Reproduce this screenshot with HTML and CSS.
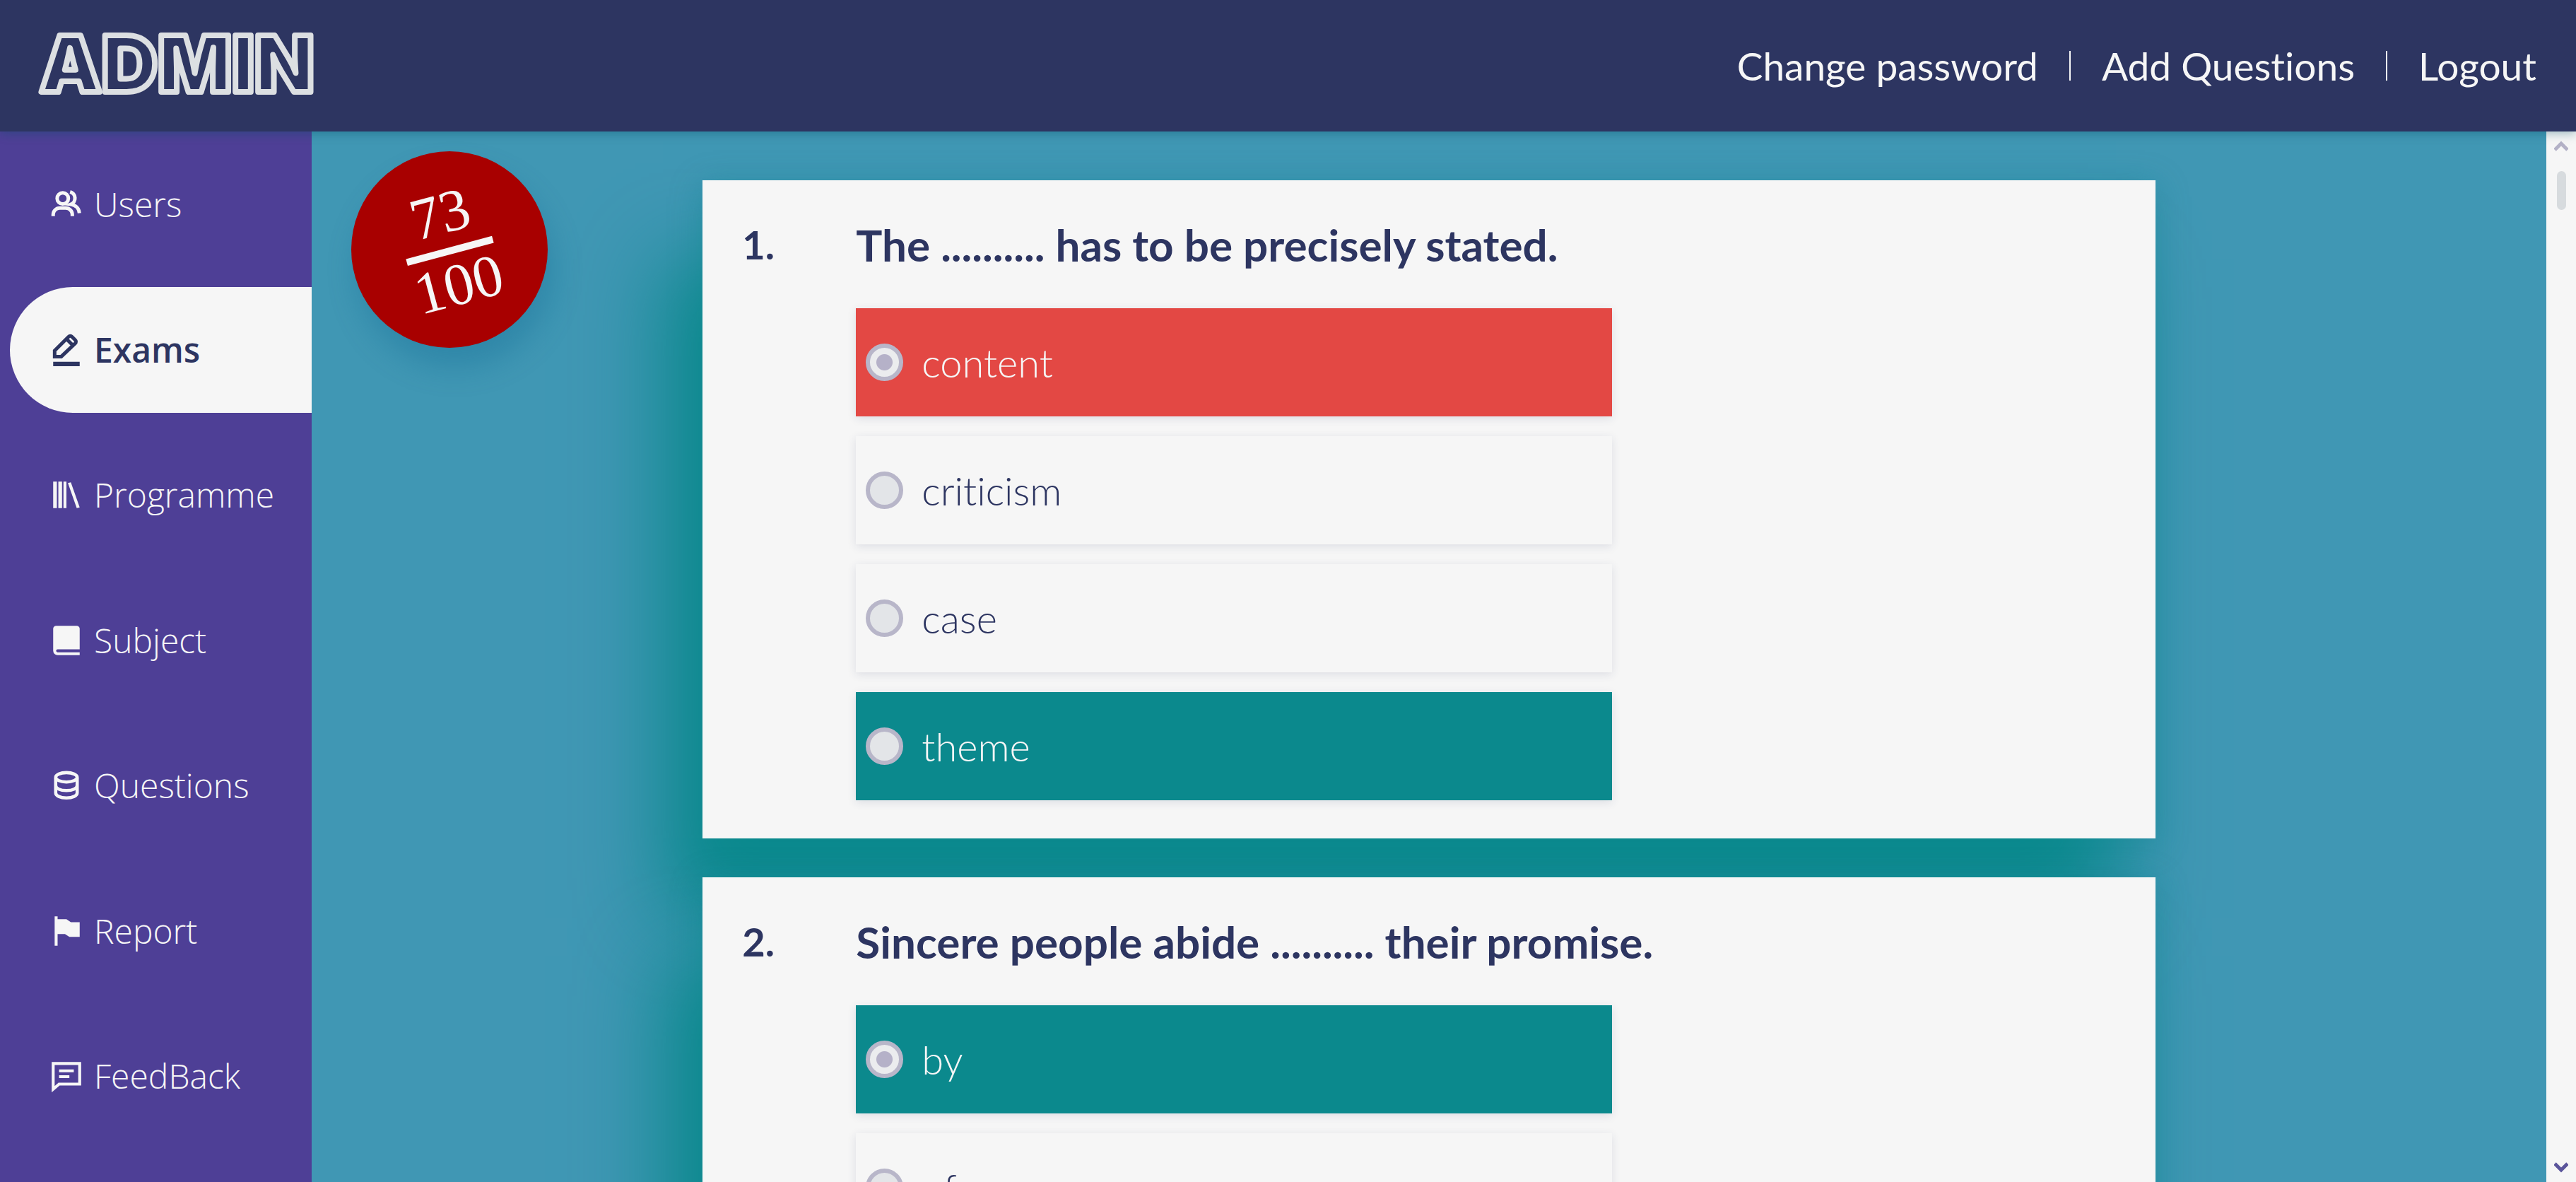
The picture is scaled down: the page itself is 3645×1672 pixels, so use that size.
FILE: index.html
```html
<!DOCTYPE html>
<html lang="en">
<head>
<meta charset="utf-8">
<title>Admin - Exams</title>
<link rel="stylesheet" href="styles.css">
</head>
<body>
<header class="topbar">
  <a class="logo" href="#"><svg class="logo-art" viewBox="0 0 400 100"><text x="0" y="87">ADMIN</text></svg></a>
  <nav class="account">
    <a href="#">Change password</a>
    <a href="#">Add Questions</a>
    <a href="#">Logout</a>
  </nav>
</header>
<div class="shell">
  <nav class="sidebar">
    <a class="side-link" href="#"><svg class="icon" viewBox="0 0 24 24" fill="none" stroke="currentColor" stroke-width="2.400"><circle cx="9.500" cy="8" r="3.800"/><path d="M3 20v-1a4.500 4.500 0 0 1 4.500-4.500h4A4.500 4.500 0 0 1 16 19v1M14.500 3.500a4.500 4.500 0 0 1 .5 8.500c3.500.5 5.500 3 5.800 6"/></svg>Users</a>
    <a class="side-link active" href="#"><svg class="icon" viewBox="0 0 24 24" fill="none" stroke="currentColor" stroke-width="2.400"><path d="M4 16.500v-4L13.500 3a1.500 1.500 0 0 1 2.200 0l2.300 2.300a1.500 1.500 0 0 1 0 2.200l-9.500 9zM12.500 5l4 4" /><path d="M3 21.500h18" stroke-width="3"/></svg>Exams</a>
    <a class="side-link" href="#"><svg class="icon" viewBox="0 0 24 24" fill="currentColor"><path d="M3 3h2.500v18H3zM6.500 3H9v18H6.500zM10 3h2v18h-2zM13 4l2-.5L21 20.500l-2 .5z"/></svg>Programme</a>
    <a class="side-link" href="#"><svg class="icon" viewBox="0 0 24 24" fill="currentColor"><path d="M21 18H6a1 1 0 0 0 0 2h15v2H6a3 3 0 0 1-3-3V4a2 2 0 0 1 2-2h14a2 2 0 0 1 2 2z"/></svg>Subject</a>
    <a class="side-link" href="#"><svg class="icon" viewBox="0 0 24 24" fill="none" stroke="currentColor" stroke-width="2.200"><ellipse cx="12" cy="6.500" rx="7.300" ry="3.200"/><path d="M4.700 7v10c0 2 3 3.500 7.300 3.500s7.300-1.500 7.300-3.500V7M4.700 12c0 2 3 3.500 7.300 3.500s7.300-1.500 7.300-3.500"/></svg>Questions</a>
    <a class="side-link" href="#"><svg class="icon" viewBox="0 0 24 24" fill="currentColor"><path d="M4 2h2v2h6l3 2h6v10h-7l-3-2H6v8H4z"/></svg>Report</a>
    <a class="side-link" href="#"><svg class="icon" viewBox="0 0 24 24" fill="none" stroke="currentColor" stroke-width="2"><path d="M3 3.500h18v14H7l-4 3.500zM7 8.500h10M7 12.500h7"/></svg>FeedBack</a>
  </nav>
  <main class="paper">
    <div class="score"><div class="fraction"><span class="got">73</span><span class="total">100</span></div></div>
    <section class="question">
      <span class="number">1.</span>
      <fieldset class="body">
        <legend class="prompt">The .......... has to be precisely stated.</legend>
        <label class="option wrong"><input type="radio" name="q1" checked disabled>content</label>
        <label class="option"><input type="radio" name="q1" disabled>criticism</label>
        <label class="option"><input type="radio" name="q1" disabled>case</label>
        <label class="option right"><input type="radio" name="q1" disabled>theme</label>
      </fieldset>
    </section>
    <section class="question">
      <span class="number">2.</span>
      <fieldset class="body">
        <legend class="prompt">Sincere people abide .......... their promise.</legend>
        <label class="option right"><input type="radio" name="q2" checked disabled>by</label>
        <label class="option"><input type="radio" name="q2" disabled>of</label>
      </fieldset>
    </section>
  </main>
  <div class="scrollbar">
    <svg class="arrow" viewBox="0 0 20 16" fill="none" stroke="#b3b1c6" stroke-width="5"><path d="M1 14l9-9 9 9"/></svg>
    <span class="thumb"></span>
    <svg class="arrow down" viewBox="0 0 20 16" fill="none" stroke="#5b559b" stroke-width="5"><path d="M1 2l9 9 9-9"/></svg>
  </div>
</div>
</body>
</html>
```
FILE: styles.css
```css
* {
  box-sizing: border-box;
}

body {
  margin: 0;
  height: 100vh;
  display: flex;
  flex-direction: column;
  overflow: hidden;
  font-family: Lato, sans-serif;
  font-variant-ligatures: none;
  color: #2d3561;
  background: #4097b4;
}

a {
  color: inherit;
  text-decoration: none;
}

.topbar {
  display: flex;
  align-items: center;
  justify-content: space-between;
  flex: none;
  height: 186px;
  padding: 0 56px;
  background: #2d3561;
  color: #f6f6f6;
  box-shadow: 0 2px 14px rgba(0, 80, 100, 0.4);
  z-index: 2;
}

.logo-art {
  display: block;
  width: 400px;
  height: 100px;
  overflow: visible;
  font: 900 110px/1 Inter, sans-serif;
  fill: #2d3561;
  stroke: #dcdfe2;
  stroke-width: 8px;
  stroke-linejoin: round;
}

.account {
  display: flex;
  align-items: center;
  font-size: 55px;
}

.account a + a {
  display: flex;
  align-items: center;
}

.account a + a::before {
  content: "";
  width: 2px;
  height: 42px;
  margin: 0 44px;
  background: #f6f6f6;
}

.shell {
  flex: 1;
  min-height: 0;
  display: grid;
  grid-template-columns: 441px 1fr 42px;
}

.sidebar {
  display: flex;
  flex-direction: column;
  justify-content: space-between;
  padding: 14px 0 61px 14px;
  background: #4e3f96;
  color: #f6f6f6;
  font: 300 48px/60px "Open Sans", sans-serif;
}

.side-link {
  display: flex;
  align-items: center;
  gap: 14px;
  height: 178px;
  padding-left: 55px;
  border-radius: 89px 0 0 89px;
}

.side-link.active {
  background: #f6f6f6;
  color: #2d3561;
  font-weight: 600;
}

.icon {
  width: 50px;
  height: 50px;
}

.paper {
  position: relative;
  display: flex;
  flex-direction: column;
  align-items: center;
  gap: 55px;
  padding: 69px 0;
  overflow: hidden;
}

.score {
  position: absolute;
  left: 56px;
  top: 28px;
  display: grid;
  place-items: center;
  width: 278px;
  height: 278px;
  border-radius: 50%;
  background: #a80000;
  color: #f6f6f6;
  font: 84px "Liberation Serif", serif;
  box-shadow: 8px 28px 42px rgba(11, 100, 141, 0.3);
}

.fraction {
  display: flex;
  flex-direction: column;
  align-items: center;
  padding-bottom: 6px;
  transform: rotate(-15deg);
}

.got {
  line-height: 98px;
}

.total {
  line-height: 88px;
  border-top: 10px solid #f6f6f6;
}

.question {
  flex: none;
  display: grid;
  grid-template-columns: 161px 1fr;
  width: 65%;
  padding: 56px 56px 54px;
  background: #f6f6f6;
  box-shadow: -56px 112px 112px #0b898d, 0 8px 42px rgba(11, 130, 141, 0.4);
}

.number,
.prompt {
  font-size: 56px;
  line-height: 70px;
  font-weight: 700;
}

.body {
  display: flex;
  flex-direction: column;
  gap: 28px;
  min-width: 0;
  margin: 0;
  padding: 0;
  border: 0;
}

.prompt {
  padding: 0;
  margin-bottom: 55px;
  font-size: 62px;
}

.option {
  display: flex;
  align-items: center;
  gap: 26px;
  width: 60%;
  height: 153px;
  padding-left: 14px;
  background: #f6f6f6;
  font-size: 56px;
  font-weight: 300;
  box-shadow: 0 3px 12px rgba(45, 53, 97, 0.12);
}

.option.wrong {
  background: #e34844;
  color: #f6f6f6;
}

.option.right {
  background: #0b898d;
  color: #f6f6f6;
}

.option input {
  appearance: none;
  width: 53px;
  height: 53px;
  margin: 0;
  border: 6px solid #b8b6c9;
  border-radius: 50%;
  background: #e3e5e8;
}

.option input:checked {
  background: radial-gradient(circle, #b5b1c8 11px, #ebecee 12px);
}

.scrollbar {
  display: flex;
  flex-direction: column;
  align-items: center;
  gap: 28px;
  padding: 12px 0;
  background: #f6f6f6;
}

.arrow {
  width: 20px;
  height: 16px;
}

.arrow.down {
  margin-top: auto;
}

.thumb {
  width: 13px;
  height: 55px;
  border-radius: 7px;
  background: #d7dbde;
}
```
